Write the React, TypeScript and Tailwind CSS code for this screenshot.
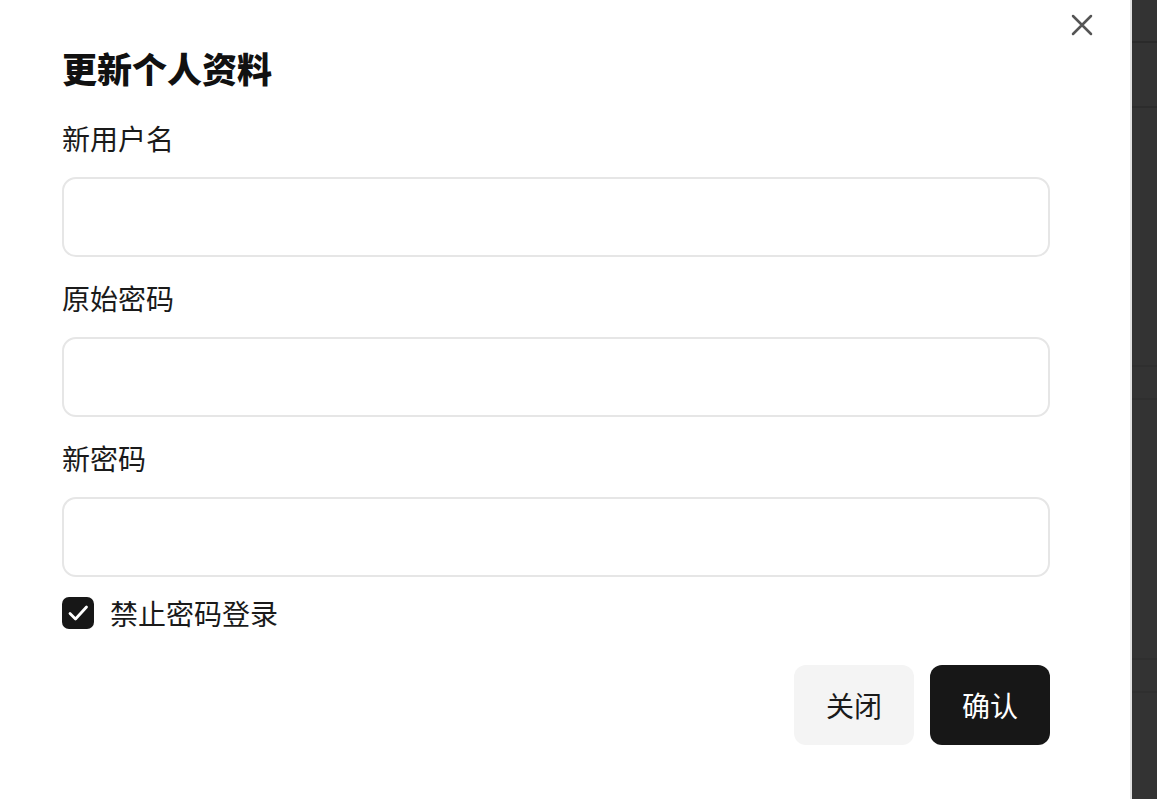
import React from "react";

const font = { fontFamily: '"Noto Sans CJK SC", "Noto Sans", sans-serif' };

function Field({ label }: { label: string }) {
  return (
    <div className="flex flex-col">
      <label className="text-[28px] leading-[42px] text-[#1a1a1a] mb-[18px]">{label}</label>
      <input
        type="text"
        className="h-[80px] w-full rounded-[14px] border-2 border-[#e6e6e6] bg-white px-4 outline-none"
      />
    </div>
  );
}

export default function App() {
  return (
    <div className="flex h-[799px] w-[1157px] overflow-hidden bg-[#333333]" style={font}>
      <div className="relative h-full w-[1132px] shrink-0 border-r-2 border-[#e2e2e2] bg-white">
        <button className="absolute left-[1070px] top-[13px] flex h-[24px] w-[24px] items-center justify-center text-[#555555]">
          <svg width="22" height="22" viewBox="0 0 22 22" fill="none" stroke="currentColor" strokeWidth="2.5" strokeLinecap="round">
            <path d="M2 2L20 20M20 2L2 20" />
          </svg>
        </button>
        <div className="flex w-[1050px] flex-col pl-[62px] pt-[47px]">
          <h1 className="text-[35px] font-black leading-[42px] text-[#111111]">更新个人资料</h1>
          <div className="mt-[28px] flex flex-col gap-[20px]">
            <Field label="新用户名" />
            <Field label="原始密码" />
            <Field label="新密码" />
          </div>
          <div className="mt-[15px] flex h-[42px] items-center gap-[16px]">
            <div className="flex h-[32px] w-[32px] items-center justify-center rounded-[7px] bg-[#171717]">
              <svg width="24" height="24" viewBox="0 0 24 24" fill="none" stroke="white" strokeWidth="2.8" strokeLinecap="round" strokeLinejoin="round">
                <path d="M4 12.5L9.5 18L20.5 6" />
              </svg>
            </div>
            <span className="text-[28px] leading-[42px] text-[#1a1a1a]">禁止密码登录</span>
          </div>
          <div className="mt-[31px] flex justify-end gap-[16px]">
            <button className="h-[80px] w-[120px] rounded-[12px] bg-[#f4f4f4] text-[28px] text-[#1a1a1a]">关闭</button>
            <button className="h-[80px] w-[120px] rounded-[12px] bg-[#171717] text-[28px] text-white">确认</button>
          </div>
        </div>
      </div>
      <div className="flex flex-1 flex-col">
        <div className="h-[43px] border-b-2 border-[#2a2a2a]" />
        <div className="h-[65px] border-b-2 border-[#2c2c2c]" />
        <div className="h-[259px] border-b-2 border-[#2f2f2f]" />
        <div className="h-[33px] border-b-2 border-[#2f2f2f]" />
        <div className="h-[260px] border-b-2 border-[#2f2f2f]" />
        <div className="h-[33px] border-b-2 border-[#2f2f2f]" />
        <div className="flex-1" />
      </div>
    </div>
  );
}
